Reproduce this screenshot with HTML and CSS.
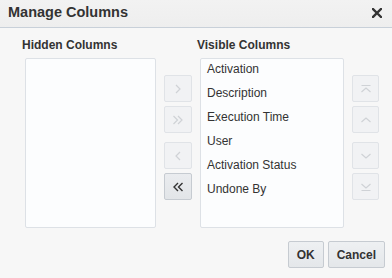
FILE: index.html
```html
<!DOCTYPE html>
<html lang="en">
<head>
    <meta charset="UTF-8">
    <title>Manage Columns</title>
    <link rel="stylesheet" href="styles.css">
</head>
<body>

    <div class="dialog">
        <div class="dialog-header">
            <span class="dialog-title">Manage Columns</span>
            <span class="close-btn">
                <svg width="10" height="10" viewBox="0 0 10 10"><path d="M1 1L9 9M9 1L1 9" stroke="#333" stroke-width="2.4" stroke-linecap="square"/></svg>
            </span>
        </div>

        <div class="panes">
            <div class="pane-label">Hidden Columns</div>
            <div class="pane-gap"></div>
            <div class="pane-label">Visible Columns</div>
            <div class="pane-gap"></div>

            <div class="list-box hidden-list"></div>

            <div class="btn-col">
                <div class="btn-group">
                    <span class="icon-btn disabled">
                        <svg width="10" height="10" viewBox="0 0 10 10"><path d="M3 1L7 5L3 9" fill="none" stroke="currentColor" stroke-width="1.2"/></svg>
                    </span>
                    <span class="icon-btn disabled">
                        <svg width="12" height="10" viewBox="0 0 12 10"><path d="M1.5 1L5.5 5L1.5 9M6 1L10 5L6 9" fill="none" stroke="currentColor" stroke-width="1.2"/></svg>
                    </span>
                </div>
                <div class="btn-group">
                    <span class="icon-btn disabled">
                        <svg width="10" height="10" viewBox="0 0 10 10"><path d="M7 1L3 5L7 9" fill="none" stroke="currentColor" stroke-width="1.2"/></svg>
                    </span>
                    <span class="icon-btn">
                        <svg width="12" height="10" viewBox="0 0 12 10"><path d="M6 1L2 5L6 9M10.5 1L6.5 5L10.5 9" fill="none" stroke="currentColor" stroke-width="1.4"/></svg>
                    </span>
                </div>
            </div>

            <div class="list-box visible-list">
                <div class="list-item">Activation</div>
                <div class="list-item">Description</div>
                <div class="list-item">Execution Time</div>
                <div class="list-item">User</div>
                <div class="list-item">Activation Status</div>
                <div class="list-item">Undone By</div>
            </div>

            <div class="btn-col">
                <div class="btn-group">
                    <span class="icon-btn disabled">
                        <svg width="12" height="10" viewBox="0 0 12 10"><path d="M1.5 1.5H10.5M1.5 8L6 4L10.5 8" fill="none" stroke="currentColor" stroke-width="1.2"/></svg>
                    </span>
                    <span class="icon-btn disabled">
                        <svg width="12" height="10" viewBox="0 0 12 10"><path d="M1.5 7L6 3L10.5 7" fill="none" stroke="currentColor" stroke-width="1.2"/></svg>
                    </span>
                </div>
                <div class="btn-group">
                    <span class="icon-btn disabled">
                        <svg width="12" height="10" viewBox="0 0 12 10"><path d="M1.5 3L6 7L10.5 3" fill="none" stroke="currentColor" stroke-width="1.2"/></svg>
                    </span>
                    <span class="icon-btn disabled">
                        <svg width="12" height="10" viewBox="0 0 12 10"><path d="M1.5 2L6 6L10.5 2M1.5 8.5H10.5" fill="none" stroke="currentColor" stroke-width="1.2"/></svg>
                    </span>
                </div>
            </div>
        </div>

        <div class="dialog-footer">
            <button class="text-btn">OK</button>
            <button class="text-btn">Cancel</button>
        </div>
    </div>

</body>
</html>
```

FILE: styles.css
```css
body {
    margin: 0;
    background: #f7f7f7;
    font-family: 'Liberation Sans', Arial, sans-serif;
    color: #333;
}

.dialog {
    width: 392px;
    height: 278px;
    background: #f7f7f7;
}

.dialog-header {
    height: 27px;
    padding: 0 10px 0 8px;
    display: flex;
    justify-content: space-between;
    background: linear-gradient(#f2f2f2, #eeeeee);
    border-bottom: 1px solid #c8d0d9;
}

.dialog-title {
    font-size: 14.5px;
    font-weight: bold;
    line-height: 24px;
}

.close-btn {
    display: flex;
    padding-top: 8px;
}

.panes {
    display: grid;
    grid-template-columns: 134px 28px 144px 27px;
    grid-template-rows: auto 170px;
    column-gap: 8px;
    padding: 10px 0 0 22px;
}

.panes > :nth-child(3) {
    margin-left: -3px;
}

.pane-label {
    font-size: 12px;
    font-weight: bold;
    line-height: 14px;
    margin-bottom: 6px;
    white-space: nowrap;
}

.list-box {
    background: #fcfdfe;
    border: 1px solid #dde1e6;
    border-radius: 2px;
    box-sizing: border-box;
}

.hidden-list {
    margin-left: 3px;
}

.list-item {
    font-size: 12px;
    line-height: 21px;
    height: 24px;
    box-sizing: border-box;
    padding-left: 6px;
}

.btn-col {
    padding-top: 17px;
    display: flex;
    flex-direction: column;
    gap: 9px;
}

.btn-group {
    display: flex;
    flex-direction: column;
    gap: 4px;
}

.icon-btn {
    height: 27px;
    box-sizing: border-box;
    display: flex;
    align-items: center;
    justify-content: center;
    background: linear-gradient(#eaecef, #e2e5e8);
    border: 1px solid #c6cbd1;
    border-radius: 2px;
    color: #333;
}

.icon-btn.disabled {
    background: #f1f2f4;
    border-color: #e0e3e7;
    color: #cfd2d6;
}

.dialog-footer {
    display: flex;
    justify-content: flex-end;
    gap: 4px;
    padding: 13px 7px 0 0;
}

.text-btn {
    height: 27px;
    padding: 0 8px;
    font-family: 'Liberation Sans', Arial, sans-serif;
    font-size: 12px;
    font-weight: bold;
    color: #333;
    background: linear-gradient(#eef0f2, #e4e7ea);
    border: 1px solid #c6cbd1;
    border-radius: 2px;
}
```
